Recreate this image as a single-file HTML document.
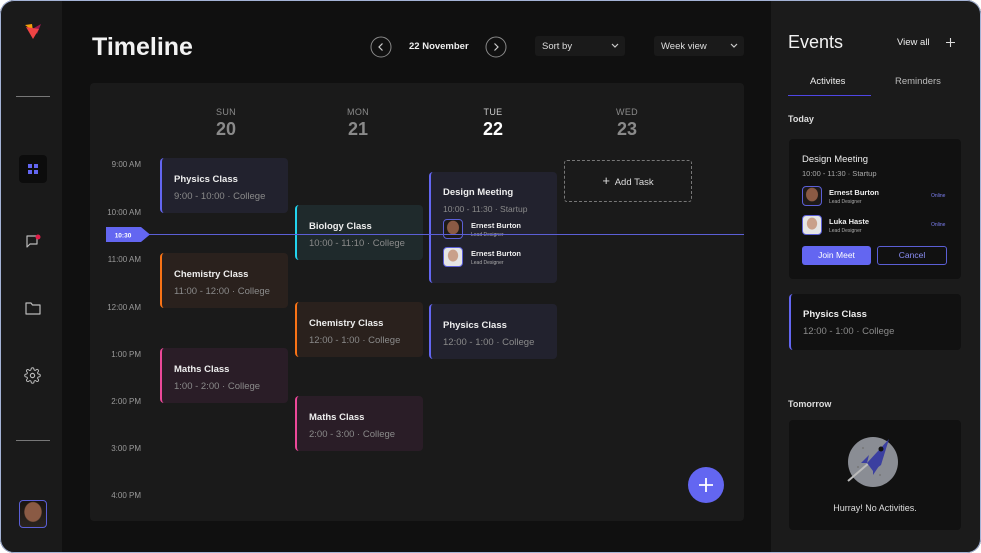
<!DOCTYPE html>
<html><head><meta charset="utf-8"><style>
*{box-sizing:border-box;margin:0;padding:0}
body{width:981px;height:553px;background:#fff;font-family:"Liberation Sans",sans-serif;position:relative;overflow:hidden}
.frame{position:absolute;left:0;top:0;width:981px;height:553px;border-radius:14px;overflow:hidden;background:#101010}
.bord{position:absolute;left:0;top:0;width:981px;height:553px;border:1.5px solid #a4b3d6;border-radius:14px;pointer-events:none}
.a{position:absolute}
.side{left:0;top:0;width:62px;height:553px;background:#1a1a1a}
.right{left:771px;top:0;width:210px;height:553px;background:#1b1b1b}
.hr{height:1px;background:#777;width:34px;left:16px}
.panel{left:90px;top:83px;width:654px;height:438px;background:#1a1a1a;border-radius:4px}
.day{width:80px;text-align:center;color:#8a8a8a}
.day .l{font-size:9px;letter-spacing:.3px}
.day .n{font-size:18px;font-weight:bold;margin-top:2px}
.time{width:60px;text-align:right;left:81px;font-size:8px;color:#9a9a9a}
.card{border-radius:4px;border-left:2px solid;padding:0 0 0 12px}
.card .t{font-size:9.5px;font-weight:bold;color:#eee}
.card .s{font-size:9.5px;color:#8a8a8a;margin-top:6px}
.blue{background:#22222e;border-color:#6366f1}
.org{background:#2a211d;border-color:#f97316}
.pink{background:#2a1d27;border-color:#ec4899}
.cyan{background:#1f2a2c;border-color:#22d3ee}
.av{width:20px;height:20px;border-radius:4px;border:1px solid #5b5fd6;overflow:hidden}
.nm{font-size:7.5px;font-weight:bold;color:#eee}
.rl{font-size:5px;color:#aaa;margin-top:2px}
.sel{height:20px;background:#1a1a1a;border-radius:3px;font-size:9.5px;color:#ddd;padding:5px 7px}
</style></head><body>
<div class="frame">
<div class="a side"></div>
<svg class="a" style="left:22px;top:22px" width="22" height="20" viewBox="0 0 22 20"><polygon points="3,3 10,2 11,9" fill="#f59e0b"/><polygon points="12,6 19,2 15,12" fill="#9d174d"/><polygon points="4,5 17,7 11,17" fill="#ef4444"/></svg>
<div class="a hr" style="top:96px"></div>
<div class="a hr" style="top:440px"></div>
<div class="a" style="left:19px;top:155px;width:28px;height:28px;background:#0c0c0c;border-radius:4px"></div>
<svg class="a" style="left:28px;top:164px" width="10" height="10"><rect x="0" y="0" width="4" height="4" fill="#6366f1"/><rect x="6" y="0" width="4" height="4" fill="#6366f1"/><rect x="0" y="6" width="4" height="4" fill="#6366f1"/><rect x="6" y="6" width="4" height="4" fill="#6366f1"/></svg>
<svg class="a" style="left:25px;top:233px" width="17" height="16" viewBox="0 0 17 16"><path d="M2 3h10v8H5l-3 3z" fill="none" stroke="#bbb" stroke-width="1.2" stroke-linejoin="round"/><circle cx="13" cy="4" r="2.5" fill="#e11d48"/></svg>
<svg class="a" style="left:25px;top:301px" width="16" height="14" viewBox="0 0 16 14"><path d="M1 2h5l1.5 2H15v9H1z" fill="none" stroke="#bbb" stroke-width="1.2" stroke-linejoin="round"/></svg>
<svg class="a" style="left:24px;top:367px" width="17" height="17" viewBox="0 0 24 24"><circle cx="12" cy="12" r="3" fill="none" stroke="#bbb" stroke-width="1.6"/><path d="M19.4 15a1.7 1.7 0 0 0 .3 1.8l.1.1a2 2 0 1 1-2.8 2.8l-.1-.1a1.7 1.7 0 0 0-1.8-.3 1.7 1.7 0 0 0-1 1.5V21a2 2 0 1 1-4 0v-.1a1.7 1.7 0 0 0-1.1-1.5 1.7 1.7 0 0 0-1.8.3l-.1.1a2 2 0 1 1-2.8-2.8l.1-.1a1.7 1.7 0 0 0 .3-1.8 1.7 1.7 0 0 0-1.5-1H3a2 2 0 1 1 0-4h.1a1.7 1.7 0 0 0 1.5-1.1 1.7 1.7 0 0 0-.3-1.8l-.1-.1a2 2 0 1 1 2.8-2.8l.1.1a1.7 1.7 0 0 0 1.8.3H9a1.7 1.7 0 0 0 1-1.5V3a2 2 0 1 1 4 0v.1a1.7 1.7 0 0 0 1 1.5 1.7 1.7 0 0 0 1.8-.3l.1-.1a2 2 0 1 1 2.8 2.8l-.1.1a1.7 1.7 0 0 0-.3 1.8V9a1.7 1.7 0 0 0 1.5 1H21a2 2 0 1 1 0 4h-.1a1.7 1.7 0 0 0-1.5 1z" fill="none" stroke="#bbb" stroke-width="1.4"/></svg>
<div class="a" style="left:19px;top:500px;width:28px;height:28px;border-radius:4px;border:1px solid #5b5fd6;background:radial-gradient(ellipse 35% 40% at 50% 42%,#8a5a44 0 90%,transparent 100%),linear-gradient(#1a1410,#2a2420)"></div>

<div class="a" style="left:92px;top:33px;font-size:25px;font-weight:bold;color:#f2f2f2">Timeline</div>
<svg class="a" style="left:370px;top:36px" width="22" height="22"><circle cx="11" cy="11" r="10" fill="none" stroke="#888"/><path d="M12.5 7.5L9 11l3.5 3.5" fill="none" stroke="#ccc" stroke-width="1.2"/></svg>
<div class="a" style="left:409px;top:41px;font-size:9.5px;font-weight:bold;color:#eee">22 November</div>
<svg class="a" style="left:485px;top:36px" width="22" height="22"><circle cx="11" cy="11" r="10" fill="none" stroke="#888"/><path d="M9.5 7.5L13 11l-3.5 3.5" fill="none" stroke="#ccc" stroke-width="1.2"/></svg>
<div class="a sel" style="left:535px;top:36px;width:90px">Sort by<svg style="position:absolute;right:6px;top:7px" width="8" height="6"><path d="M1 1l3 3 3-3" fill="none" stroke="#ccc" stroke-width="1.2"/></svg></div>
<div class="a sel" style="left:654px;top:36px;width:90px">Week view<svg style="position:absolute;right:6px;top:7px" width="8" height="6"><path d="M1 1l3 3 3-3" fill="none" stroke="#ccc" stroke-width="1.2"/></svg></div>

<div class="a panel"></div>
<div class="a day" style="left:186px;top:107px"><div class="l">SUN</div><div class="n">20</div></div>
<div class="a day" style="left:318px;top:107px"><div class="l">MON</div><div class="n">21</div></div>
<div class="a day" style="left:453px;top:107px;color:#fff"><div class="l" style="color:#ccc">TUE</div><div class="n">22</div></div>
<div class="a day" style="left:587px;top:107px"><div class="l">WED</div><div class="n">23</div></div>

<div class="a time" style="top:160px">9:00 AM</div>
<div class="a time" style="top:208px">10:00 AM</div>
<div class="a time" style="top:255px">11:00 AM</div>
<div class="a time" style="top:303px">12:00 AM</div>
<div class="a time" style="top:350px">1:00 PM</div>
<div class="a time" style="top:397px">2:00 PM</div>
<div class="a time" style="top:444px">3:00 PM</div>
<div class="a time" style="top:491px">4:00 PM</div>

<div class="a card blue" style="left:160px;top:158px;width:128px;height:55px;padding-top:16px"><div class="t">Physics Class</div><div class="s">9:00 - 10:00 · College</div></div>
<div class="a card org" style="left:160px;top:253px;width:128px;height:55px;padding-top:16px"><div class="t">Chemistry Class</div><div class="s">11:00 - 12:00 · College</div></div>
<div class="a card pink" style="left:160px;top:348px;width:128px;height:55px;padding-top:16px"><div class="t">Maths Class</div><div class="s">1:00 - 2:00 · College</div></div>
<div class="a card cyan" style="left:295px;top:205px;width:128px;height:55px;padding-top:16px"><div class="t">Biology Class</div><div class="s">10:00 - 11:10 · College</div></div>
<div class="a card org" style="left:295px;top:302px;width:128px;height:55px;padding-top:16px"><div class="t">Chemistry Class</div><div class="s">12:00 - 1:00 · College</div></div>
<div class="a card pink" style="left:295px;top:396px;width:128px;height:55px;padding-top:16px"><div class="t">Maths Class</div><div class="s">2:00 - 3:00 · College</div></div>
<div class="a card blue" style="left:429px;top:172px;width:128px;height:111px;padding-top:15px"><div class="t">Design Meeting</div><div class="s" style="font-size:8.5px">10:00 - 11:30 · Startup</div></div>
<div class="a av" style="left:443px;top:219px;background:radial-gradient(ellipse 35% 40% at 50% 42%,#8a5a44 0 90%,transparent 100%),#1e1a18"></div>
<div class="a" style="left:471px;top:221px"><div class="nm">Ernest Burton</div><div class="rl">Lead Designer</div></div>
<div class="a av" style="left:443px;top:247px;background:radial-gradient(ellipse 30% 35% at 50% 42%,#c9a08a 0 90%,transparent 100%),#e5e5e5"></div>
<div class="a" style="left:471px;top:249px"><div class="nm">Ernest Burton</div><div class="rl">Lead Designer</div></div>
<div class="a card blue" style="left:429px;top:304px;width:128px;height:55px;padding-top:16px"><div class="t">Physics Class</div><div class="s">12:00 - 1:00 · College</div></div>
<div class="a" style="left:564px;top:160px;width:128px;height:42px;border:1px dashed #777;border-radius:3px;color:#ddd;font-size:9.5px;text-align:center;line-height:40px"><span style="font-size:13px">+</span>&nbsp; Add Task</div>

<div class="a" style="left:140px;top:234px;width:604px;height:1px;background:#5b5fd6"></div>
<svg class="a" style="left:106px;top:227px" width="46" height="15"><polygon points="0,0 35,0 44,7.5 35,15 0,15" fill="#6366f1"/><text x="17" y="10.5" font-size="6.5" font-weight="bold" fill="#fff" text-anchor="middle" font-family="Liberation Sans">10:30</text></svg>

<div class="a" style="left:688px;top:467px;width:36px;height:36px;border-radius:50%;background:#6366f1"></div>
<svg class="a" style="left:697px;top:476px" width="18" height="18"><path d="M9 2v14M2 9h14" stroke="#fff" stroke-width="1.8"/></svg>

<div class="a right"></div>
<div class="a" style="left:788px;top:32px;font-size:18px;color:#f2f2f2">Events</div>
<div class="a" style="left:897px;top:37px;font-size:9.5px;color:#eee">View all</div>
<svg class="a" style="left:945px;top:37px" width="11" height="11"><path d="M5.5 1v9M1 5.5h9" stroke="#ddd" stroke-width="1.1"/></svg>
<div class="a" style="left:810px;top:76px;font-size:9.5px;color:#eee">Activites</div>
<div class="a" style="left:895px;top:76px;font-size:9.5px;color:#bbb">Reminders</div>
<div class="a" style="left:788px;top:95px;width:83px;height:1px;background:#4f46e5"></div>
<div class="a" style="left:788px;top:114px;font-size:9px;font-weight:bold;color:#ddd">Today</div>

<div class="a" style="left:789px;top:139px;width:172px;height:140px;background:#111;border-radius:4px"></div>
<div class="a" style="left:802px;top:154px;font-size:9.5px;color:#eee">Design Meeting</div>
<div class="a" style="left:802px;top:169px;font-size:7.5px;color:#aaa">10:00 - 11:30 · Startup</div>
<div class="a av" style="left:802px;top:186px;background:radial-gradient(ellipse 35% 40% at 50% 42%,#8a5a44 0 90%,transparent 100%),#1e1a18"></div>
<div class="a" style="left:829px;top:188px"><div class="nm">Ernest Burton</div><div class="rl">Lead Designer</div></div>
<div class="a" style="left:931px;top:193px;font-size:5px;color:#7c7ff0">Online</div>
<div class="a av" style="left:802px;top:215px;background:radial-gradient(ellipse 30% 35% at 50% 42%,#c9a08a 0 90%,transparent 100%),#e5e5e5"></div>
<div class="a" style="left:829px;top:217px"><div class="nm">Luka Haste</div><div class="rl">Lead Designer</div></div>
<div class="a" style="left:931px;top:222px;font-size:5px;color:#7c7ff0">Online</div>
<div class="a" style="left:802px;top:246px;width:69px;height:19px;background:#6366f1;border-radius:3px;color:#fff;font-size:8.5px;text-align:center;line-height:19px">Join Meet</div>
<div class="a" style="left:877px;top:246px;width:70px;height:19px;border:1px solid #5b5fd6;border-radius:3px;color:#8b8ef5;font-size:8.5px;text-align:center;line-height:17px">Cancel</div>

<div class="a card" style="left:789px;top:294px;width:172px;height:56px;background:#111;border-color:#6366f1;padding-top:15px"><div class="t">Physics Class</div><div class="s">12:00 - 1:00 · College</div></div>

<div class="a" style="left:788px;top:399px;font-size:9px;font-weight:bold;color:#ddd">Tomorrow</div>
<div class="a" style="left:789px;top:420px;width:172px;height:110px;background:#111;border-radius:4px"></div>
<svg class="a" style="left:845px;top:435px" width="56" height="52" viewBox="0 0 56 52"><circle cx="28" cy="27" r="25" fill="#8a8d94"/><circle cx="18" cy="13" r="1" fill="#777"/><circle cx="13" cy="32" r="1" fill="#777"/><circle cx="35" cy="40" r="1" fill="#777"/><path d="M3 46L24 28" stroke="#bbb" stroke-width="2"/><path d="M22 28l22-24-8 26-8 6z" fill="#3b3fa0"/><path d="M22 28l-6 0 8-8z" fill="#3b3fa0"/><path d="M28 34l0 6 6-9z" fill="#3b3fa0"/><circle cx="36" cy="14" r="2.5" fill="#111"/></svg>
<div class="a" style="left:789px;top:503px;width:172px;text-align:center;font-size:9px;color:#ddd">Hurray! No Activities.</div>
</div>
<div class="bord"></div>
</body></html>
